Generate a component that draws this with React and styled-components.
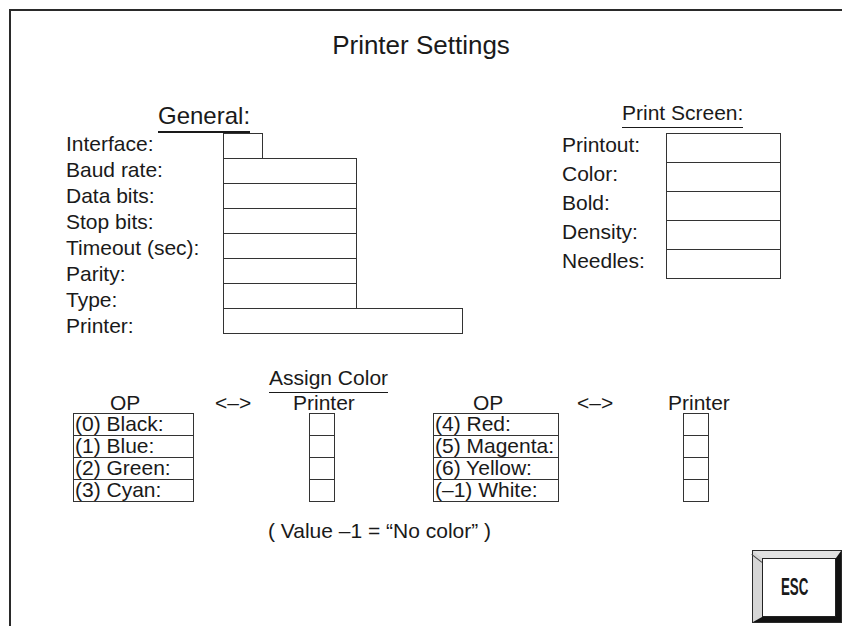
import React from 'react';
import styled, { createGlobalStyle } from 'styled-components';

const GlobalStyle = createGlobalStyle`
  html, body {
    margin: 0;
    padding: 0;
    background: #ffffff;
    overflow: hidden;
  }
  body {
    font-family: "Liberation Sans", Arial, sans-serif;
    color: #1a1a1a;
  }
`;

// main screen frame, right and bottom edges run off the screen
const Frame = styled.div`
  margin: 9px 0 0 9px;
  width: 831px;
  min-height: 640px;
  border-left: 2px solid #2a2a2a;
  border-top: 2px solid #2a2a2a;
  display: flex;
  flex-direction: column;
`;

const Title = styled.h1`
  margin: 19px 11px 0 0;
  font-size: 26px;
  line-height: 30px;
  font-weight: normal;
  text-align: center;
`;

const MainRow = styled.div`
  display: flex;
  align-items: flex-start;
  margin-top: 43px;
  padding-left: 55px;
`;

const Column = styled.div`
  display: flex;
  flex-direction: column;
  align-items: flex-start;
  width: ${(p) => p.$w}px;
  margin-left: ${(p) => p.$ml || 0}px;
  padding-top: ${(p) => p.$pt || 0}px;
`;

const SectionHead = styled.div`
  margin-left: ${(p) => p.$ml}px;
  margin-bottom: ${(p) => p.$mb || 0}px;
  font-size: ${(p) => p.$size}px;
  line-height: ${(p) => p.$lh}px;
  padding-bottom: ${(p) => p.$pb}px;
  border-bottom: ${(p) => p.$bw}px solid #1a1a1a;
`;

// labels and boxes of the general block sit in two columns with their own pitch
const GeneralGrid = styled.div`
  display: flex;
  align-items: flex-start;
`;

const LabelList = styled.div`
  display: flex;
  flex-direction: column;
  width: ${(p) => p.$w}px;
  margin-top: ${(p) => p.$mt || 0}px;
  font-size: 21px;
  line-height: ${(p) => p.$lh}px;
  white-space: nowrap;
`;

const BoxList = styled.div`
  display: flex;
  flex-direction: column;
`;

const FieldRow = styled.div`
  display: flex;
  align-items: flex-start;
  height: ${(p) => p.$h}px;
`;

const FieldLabel = styled.span`
  width: ${(p) => p.$w}px;
  font-size: 21px;
  line-height: ${(p) => p.$lh}px;
  white-space: nowrap;
`;

const FieldBox = styled.div`
  box-sizing: border-box;
  width: ${(p) => p.$w}px;
  height: ${(p) => p.$h + 1}px;
  border: 1px solid #333;
  background: #fff;

  & + & {
    margin-top: -1px;
  }
`;

const ColorSection = styled.div`
  display: flex;
  align-items: flex-start;
  margin-top: 28px;
  padding-left: 62px;
`;

const ColorCol = styled.div`
  display: flex;
  flex-direction: column;
  align-items: flex-start;
  width: ${(p) => p.$w}px;
  margin-left: ${(p) => p.$ml || 0}px;
`;

const HeadArea = styled.div`
  height: 46px;
  align-self: stretch;
  display: flex;
  flex-direction: column;
  justify-content: flex-end;
  align-items: flex-start;
`;

const HeadText = styled.div`
  font-size: 21px;
  line-height: 20px;
  margin-left: ${(p) => p.$ml || 0}px;
  white-space: nowrap;
`;

const AssignHead = styled.div`
  font-size: 21px;
  line-height: 20px;
  padding-bottom: 4px;
  border-bottom: 1px solid #1a1a1a;
  white-space: nowrap;
`;

const Stack = styled.div`
  display: flex;
  flex-direction: column;
  margin-left: ${(p) => p.$ml || 0}px;
`;

const Cell = styled.div`
  box-sizing: border-box;
  width: ${(p) => p.$w}px;
  height: 23px;
  border: 1px solid #333;
  padding-left: 1px;
  font-size: 21px;
  line-height: 20px;
  white-space: nowrap;

  & + & {
    margin-top: -1px;
  }
`;

const Note = styled.div`
  margin: 17px 0 0 257px;
  font-size: 21px;
  line-height: 24px;
`;

const EscRow = styled.div`
  display: flex;
  justify-content: flex-end;
  margin-top: 7px;
`;

const EscButton = styled.button`
  box-sizing: border-box;
  width: 90px;
  height: 73px;
  padding: 0;
  border: 1px solid #2a2a2a;
  background: #fff;
  position: relative;
  cursor: pointer;
  font-family: inherit;

  &::before {
    content: '';
    position: absolute;
    left: -1px;
    top: 3px;
    width: 13px;
    height: 1px;
    background: #444;
    transform: rotate(38deg);
    transform-origin: 0 0;
  }
`;

const EscBevel = styled.div`
  box-sizing: border-box;
  width: 100%;
  height: 100%;
  border-style: solid;
  border-width: 7px 5px 5px 9px;
  border-color: #e2e2e2 #121212 #121212 #d6d6d6;
`;

const EscFace = styled.div`
  box-sizing: border-box;
  width: 100%;
  height: 100%;
  border: 1px solid #222;
  background: #fff;
  display: flex;
  align-items: center;
  justify-content: center;
  padding-right: 9px;
`;

const EscText = styled.span`
  display: inline-block;
  font-size: 23px;
  font-weight: bold;
  color: #1a1a1a;
  transform: scaleX(0.58);
`;

const generalFields = [
  { label: 'Interface:', w: 40 },
  { label: 'Baud rate:', w: 134 },
  { label: 'Data bits:', w: 134 },
  { label: 'Stop bits:', w: 134 },
  { label: 'Timeout (sec):', w: 134 },
  { label: 'Parity:', w: 134 },
  { label: 'Type:', w: 134 },
  { label: 'Printer:', w: 240 },
];

const screenFields = ['Printout:', 'Color:', 'Bold:', 'Density:', 'Needles:'];

const leftColors = ['(0) Black:', '(1) Blue:', '(2) Green:', '(3) Cyan:'];
const rightColors = ['(4) Red:', '(5) Magenta:', '(6) Yellow:', '(–1) White:'];

const PrinterSettings = () => {
  return (
    <Frame>
      <Title>Printer Settings</Title>

      <MainRow>
        <Column $w={397} $pt={1}>
          <SectionHead $ml={92} $size={24} $lh={24} $pb={3} $bw={2}>
            General:
          </SectionHead>
          <GeneralGrid>
            <LabelList $w={157} $lh={26} $mt={-2}>
              {generalFields.map((f) => (
                <span key={f.label}>{f.label}</span>
              ))}
            </LabelList>
            <BoxList>
              {generalFields.map((f) => (
                <FieldBox key={f.label} $w={f.w} $h={25} />
              ))}
            </BoxList>
          </GeneralGrid>
        </Column>

        <Column $w={220} $ml={99}>
          <SectionHead $ml={60} $size={21} $lh={20} $pb={4} $bw={1} $mb={5}>
            Print Screen:
          </SectionHead>
          {screenFields.map((label) => (
            <FieldRow key={label} $h={29}>
              <FieldLabel $w={104} $lh={24}>
                {label}
              </FieldLabel>
              <FieldBox $w={115} $h={29} />
            </FieldRow>
          ))}
        </Column>
      </MainRow>

      <ColorSection>
        <ColorCol $w={121}>
          <HeadArea>
            <HeadText $ml={37}>OP</HeadText>
          </HeadArea>
          <Stack>
            {leftColors.map((c) => (
              <Cell key={c} $w={121}>
                {c}
              </Cell>
            ))}
          </Stack>
        </ColorCol>

        <ColorCol $w={38} $ml={21}>
          <HeadArea>
            <HeadText>&lt;–&gt;</HeadText>
          </HeadArea>
        </ColorCol>

        <ColorCol $w={120} $ml={16}>
          <HeadArea>
            <AssignHead>Assign Color</AssignHead>
            <HeadText $ml={24}>Printer</HeadText>
          </HeadArea>
          <Stack $ml={40}>
            {leftColors.map((c) => (
              <Cell key={c} $w={26} />
            ))}
          </Stack>
        </ColorCol>

        <ColorCol $w={126} $ml={44}>
          <HeadArea>
            <HeadText $ml={40}>OP</HeadText>
          </HeadArea>
          <Stack>
            {rightColors.map((c) => (
              <Cell key={c} $w={126}>
                {c}
              </Cell>
            ))}
          </Stack>
        </ColorCol>

        <ColorCol $w={38} $ml={18}>
          <HeadArea>
            <HeadText>&lt;–&gt;</HeadText>
          </HeadArea>
        </ColorCol>

        <ColorCol $w={62} $ml={53}>
          <HeadArea>
            <HeadText>Printer</HeadText>
          </HeadArea>
          <Stack $ml={15}>
            {rightColors.map((c) => (
              <Cell key={c} $w={26} />
            ))}
          </Stack>
        </ColorCol>
      </ColorSection>

      <Note>( Value –1 = “No color” )</Note>

      <EscRow>
        <EscButton>
          <EscBevel>
            <EscFace>
              <EscText>ESC</EscText>
            </EscFace>
          </EscBevel>
        </EscButton>
      </EscRow>
    </Frame>
  );
};

export default function App() {
  return (
    <>
      <GlobalStyle />
      <PrinterSettings />
    </>
  );
}
